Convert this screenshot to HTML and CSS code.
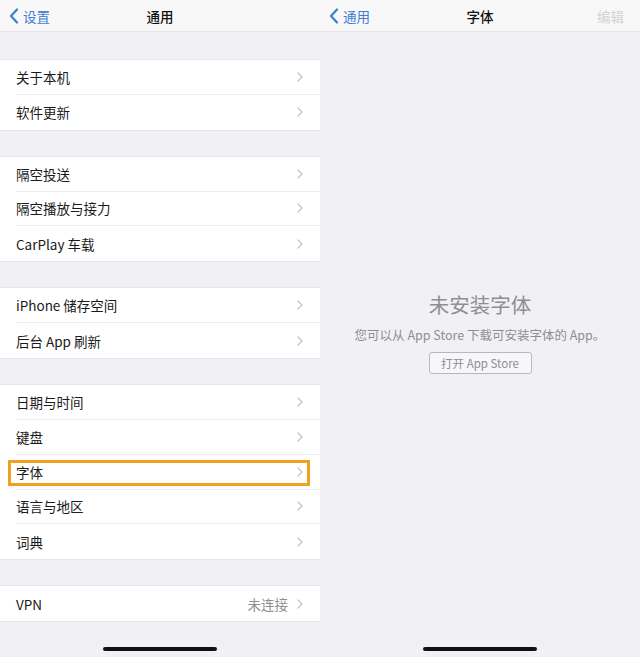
FILE: index.html
```html
<!DOCTYPE html>
<html lang="zh-CN">
  <head>
    <meta charset="UTF-8" />
    <meta name="viewport" content="width=device-width, initial-scale=1.0" />
    <title>通用 / 字体</title>
    <link rel="stylesheet" href="styles.css">
  </head>
  <body>
    <div class="wrapper">
      <!-- linke Seite: Einstellungen > Allgemein -->
      <div class="screen">
        <div class="navbar">
          <div class="back">
            <svg width="10" height="16" viewBox="0 0 10 16"><path d="M8 1.5 L2 8 L8 14.5" fill="none" stroke="#3e7bd2" stroke-width="2.2" stroke-linecap="round" stroke-linejoin="round"/></svg>
            <span>设置</span>
          </div>
          <div class="title">通用</div>
          <div class="right"></div>
        </div>

        <div class="group first">
          <div class="row"><span class="label">关于本机</span><svg class="chevron" width="6" height="10" viewBox="0 0 6 10"><path d="M1 1 L5 5 L1 9" /></svg></div>
          <div class="row"><span class="label">软件更新</span><svg class="chevron" width="6" height="10" viewBox="0 0 6 10"><path d="M1 1 L5 5 L1 9" /></svg></div>
        </div>

        <div class="group">
          <div class="row"><span class="label">隔空投送</span><svg class="chevron" width="6" height="10" viewBox="0 0 6 10"><path d="M1 1 L5 5 L1 9" /></svg></div>
          <div class="row"><span class="label">隔空播放与接力</span><svg class="chevron" width="6" height="10" viewBox="0 0 6 10"><path d="M1 1 L5 5 L1 9" /></svg></div>
          <div class="row"><span class="label">CarPlay 车载</span><svg class="chevron" width="6" height="10" viewBox="0 0 6 10"><path d="M1 1 L5 5 L1 9" /></svg></div>
        </div>

        <div class="group">
          <div class="row"><span class="label">iPhone 储存空间</span><svg class="chevron" width="6" height="10" viewBox="0 0 6 10"><path d="M1 1 L5 5 L1 9" /></svg></div>
          <div class="row"><span class="label">后台 App 刷新</span><svg class="chevron" width="6" height="10" viewBox="0 0 6 10"><path d="M1 1 L5 5 L1 9" /></svg></div>
        </div>

        <div class="group">
          <div class="row"><span class="label">日期与时间</span><svg class="chevron" width="6" height="10" viewBox="0 0 6 10"><path d="M1 1 L5 5 L1 9" /></svg></div>
          <div class="row"><span class="label">键盘</span><svg class="chevron" width="6" height="10" viewBox="0 0 6 10"><path d="M1 1 L5 5 L1 9" /></svg></div>
          <div class="row marked"><span class="label">字体</span><svg class="chevron" width="6" height="10" viewBox="0 0 6 10"><path d="M1 1 L5 5 L1 9" /></svg></div>
          <div class="row"><span class="label">语言与地区</span><svg class="chevron" width="6" height="10" viewBox="0 0 6 10"><path d="M1 1 L5 5 L1 9" /></svg></div>
          <div class="row"><span class="label">词典</span><svg class="chevron" width="6" height="10" viewBox="0 0 6 10"><path d="M1 1 L5 5 L1 9" /></svg></div>
        </div>

        <div class="group">
          <div class="row"><span class="label">VPN</span><span class="detail">未连接</span><svg class="chevron" width="6" height="10" viewBox="0 0 6 10"><path d="M1 1 L5 5 L1 9" /></svg></div>
        </div>

        <div class="home-bar"></div>
      </div>

      <!-- rechte Seite: Schriften -->
      <div class="screen">
        <div class="navbar">
          <div class="back">
            <svg width="10" height="16" viewBox="0 0 10 16"><path d="M8 1.5 L2 8 L8 14.5" fill="none" stroke="#3e7bd2" stroke-width="2.2" stroke-linecap="round" stroke-linejoin="round"/></svg>
            <span>通用</span>
          </div>
          <div class="title">字体</div>
          <div class="right disabled">编辑</div>
        </div>

        <div class="empty">
          <div class="empty-title">未安装字体</div>
          <div class="empty-text">您可以从 App Store 下载可安装字体的 App。</div>
          <button class="store-button">打开 App Store</button>
        </div>

        <div class="home-bar"></div>
      </div>
    </div>
  </body>
</html>
```

FILE: styles.css
```css
body {
  margin: 0;
  font-family: "Noto Sans CJK SC", "Noto Sans", sans-serif;
  overflow: hidden;
  background: #f1f1f5;
}

.wrapper {
  display: flex;
  height: 657px;
}

.screen {
  width: 320px;
  height: 657px;
  background: #f1f1f5;
  display: flex;
  flex-direction: column;
  position: relative;
}

.navbar {
  height: 32px;
  flex-shrink: 0;
  background: #f8f8f9;
  border-bottom: solid 1px #e4e4e7;
  display: flex;
  align-items: center;
  padding: 0 9px;
  box-sizing: border-box;
}

.back {
  width: 70px;
  display: flex;
  align-items: center;
  gap: 4px;
  color: #3e7bd2;
  font-size: 13.5px;
}

.title {
  flex: 1;
  text-align: center;
  font-size: 13.5px;
  font-weight: 500;
  color: #111;
}

.right {
  width: 70px;
  text-align: right;
  font-size: 13.5px;
  padding-right: 7px;
  box-sizing: border-box;
}

.disabled {
  color: #d2d2d6;
}

.group {
  flex-shrink: 0;
  background: #fff;
  margin-top: 25.2px;
  border-top: solid 1px #e6e6e9;
  border-bottom: solid 1px #e6e6e9;
}

.group.first {
  margin-top: 27px;
}

.row {
  height: 34.8px;
  box-sizing: border-box;
  margin-left: 16px;
  padding-right: 17px;
  display: flex;
  align-items: center;
  border-bottom: solid 1px #ececef;
  font-size: 13.5px;
  color: #1a1a1a;
  position: relative;
}

.row:last-child {
  border-bottom: none;
}

.label {
  flex: 1;
}

.detail {
  color: #8e8e93;
  margin-right: 9px;
}

.chevron {
  fill: none;
  stroke: #c5c5c9;
  stroke-width: 1.3;
  stroke-linecap: round;
  stroke-linejoin: round;
}

/* orange Markierung ueber der Zeile */
.marked::after {
  content: "";
  position: absolute;
  left: -8px;
  right: 10px;
  top: 5px;
  bottom: 3px;
  border: solid 3px #eea21f;
}

.empty {
  margin-top: 258px;
  display: flex;
  flex-direction: column;
  align-items: center;
}

.empty-title {
  font-size: 20.5px;
  color: #8e8e93;
  line-height: 28px;
}

.empty-text {
  font-size: 12.5px;
  color: #8e8e93;
  margin-top: 7px;
}

.store-button {
  margin-top: 8px;
  font-family: inherit;
  font-size: 11.5px;
  color: #8e8e93;
  background: #f7f7f9;
  border: solid 1px #b9b9bd;
  border-radius: 3px;
  height: 22px;
  width: 103px;
  padding: 0;
}

.home-bar {
  position: absolute;
  bottom: 6px;
  left: 103px;
  width: 114px;
  height: 4px;
  border-radius: 2px;
  background: #111;
}
```
